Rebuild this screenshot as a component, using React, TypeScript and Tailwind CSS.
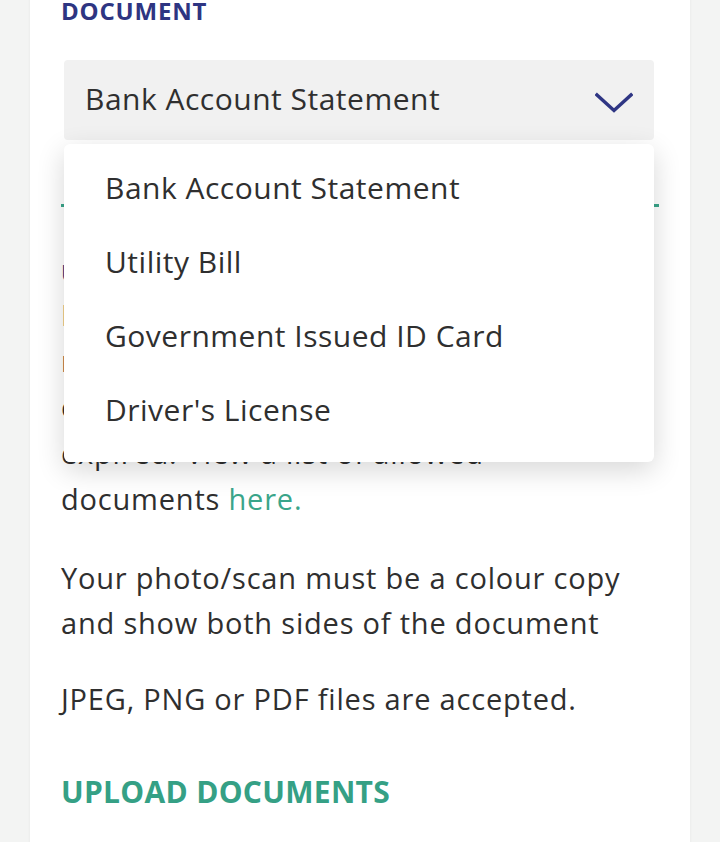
import { useState } from "react"

const options = [
  "Bank Account Statement",
  "Utility Bill",
  "Government Issued ID Card",
  "Driver's License",
]

function Chevron() {
  return (
    <svg width="38" height="22" viewBox="0 0 38 22" fill="none">
      <path d="M2 3 L19 18.5 L36 3" stroke="#2f3684" strokeWidth="3.5" strokeLinecap="square" />
    </svg>
  )
}

export default function App() {
  const [value] = useState(options[0])

  return (
    <div
      className="min-h-[842px] w-[720px] overflow-hidden bg-[#f3f4f3] text-[#2f2f2f]"
      style={{ fontFamily: '"Open Sans", "Liberation Sans", sans-serif' }}>
      <div className="mx-[30px] -mt-[9px] min-h-[851px] bg-white px-[31px] pb-10 shadow-[0_0_3px_rgba(0,0,0,0.06)]">
        <h2 className="text-[24px] font-bold uppercase leading-[40px] tracking-[0.8px] text-[#2e3582]">
          Document
        </h2>

        <div className="relative ml-[3px] mr-[5px] mt-[29px]">
          <div className="flex h-[80px] items-center justify-between rounded-[4px] bg-[#f1f1f1] pl-[21px] pr-[21px]">
            <span className="-mt-[2px] text-[30px] leading-none tracking-[0.5px]">{value}</span>
            <span className="mt-[5px]">
              <Chevron />
            </span>
          </div>

          <ul className="absolute left-0 right-0 top-[84px] z-10 rounded-[6px] bg-white pb-[16px] pt-[6px] shadow-[0_8px_28px_rgba(0,0,0,0.16)]">
            {options.map((o) => (
              <li key={o} className="flex h-[74px] items-center pl-[41px] text-[30px] tracking-[0.5px]">
                {o}
              </li>
            ))}
          </ul>
        </div>

        <div className="mt-[64px] h-[3px] bg-[#3aa58a]" />

        <h3 className="mt-[52px] text-[24px] font-bold uppercase leading-[28px] tracking-[0.5px] text-[#2e3582]">
          Upload requirements
        </h3>

        <p className="mt-[5px] text-[29px] leading-[46px] tracking-[0.8px]">
          Please upload a document
          <br />
          matching your name and
          <br />
          current address that is not
          <br />
          expired. View a list of allowed
          <br />
          documents <span className="text-[#3aa58a]">here.</span>
        </p>

        <p className="mt-[33px] text-[29px] leading-[45px] tracking-[0.8px]">
          Your photo/scan must be a colour copy
          <br />
          and show both sides of the document
        </p>

        <p className="mt-[31px] text-[29px] leading-[45px] tracking-[0.8px]">
          JPEG, PNG or PDF files are accepted.
        </p>

        <h3 className="mt-[53px] text-[30px] font-bold uppercase leading-[36px] tracking-[0.3px] text-[#35a085]">
          Upload documents
        </h3>
      </div>
    </div>
  )
}
